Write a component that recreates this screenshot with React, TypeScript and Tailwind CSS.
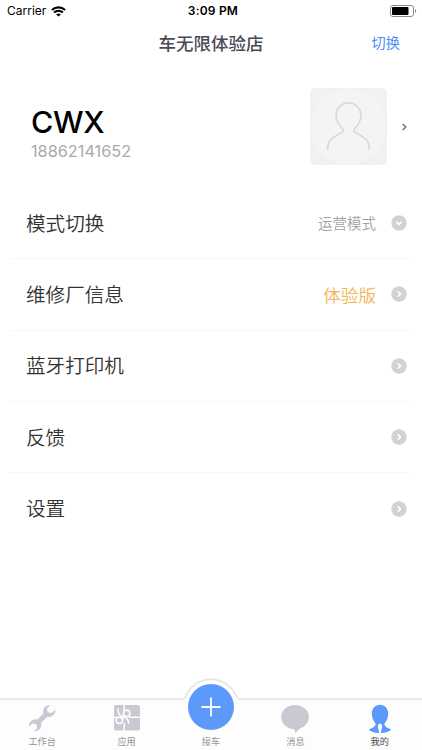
import { useState } from 'react';

const MENU = [
    { label: '模式切换', value: '运营模式', valueClass: 'text-[14.5px] text-[#a3a3a3]', arrow: 'down' },
    { label: '维修厂信息', value: '体验版', valueClass: 'text-[17.6px] text-[#f3b459]', arrow: 'right' },
    { label: '蓝牙打印机', value: '', valueClass: '', arrow: 'right' },
    { label: '反馈', value: '', valueClass: '', arrow: 'right' },
    { label: '设置', value: '', valueClass: '', arrow: 'right' },
];

function StatusBar() {
    return (
        <div className="grid h-[22px] grid-cols-[1fr_auto_1fr] items-center pl-[7px] pr-[5px] text-black">
            <div className="flex items-center gap-[5px]">
                <span className="text-[12px] leading-none">Carrier</span>
                <svg className="h-[11px] w-[15px]" viewBox="0 0 15 11" fill="none" stroke="#000" strokeWidth="2.2">
                    <path d="M.9 4C4.6.5 10.400.5 14.100 4" />
                    <path d="M3.100 6.500c2.500-2.300 6.300-2.300 8.800 0" />
                    <path d="M7.500 10.600L5.200 8.400c1.200-1.200 3.400-1.200 4.600 0z" fill="#000" stroke="none" />
                </svg>
            </div>
            <span className="pl-[2px] text-center text-[12px] font-semibold leading-none tracking-[0.2px]">3:09 PM</span>
            <svg className="h-[12px] w-[27px] justify-self-end" viewBox="0 0 27 12" fill="none">
                <rect x=".5" y=".5" width="23" height="11" rx="2.5" stroke="#8a8a8a" />
                <rect x="2" y="2" width="16.5" height="8" rx="1" fill="#000" />
                <path d="M25 4v4c1.6-.6 1.6-3.4 0-4z" fill="#8a8a8a" />
            </svg>
        </div>
    );
}

function Avatar() {
    return (
        <div className="h-[77px] w-[77px] overflow-hidden rounded-[5px] bg-[#f1f1f1]">
            <svg viewBox="0 0 76 76" fill="none">
                <circle cx="38" cy="38" r="37.5" fill="#f4f4f4" />
                <path
                    d="M17.500 61.500v-2c0-5 2-8.500 5.500-10.700l8.300-5c1.700-1 1.800-2 .8-3.300-3.500-3.800-6.400-8-6.400-13.500a12.300 12.300 0 0 1 24.600 0c0 5.500-2.900 9.700-6.400 13.500-1 1.300-.9 2.300.8 3.300l8.300 5c3.500 2.200 5.500 5.700 5.500 10.700v2"
                    stroke="#d9d9d9"
                    strokeWidth="1.700"
                />
            </svg>
        </div>
    );
}

function ArrowDot({ direction }: { direction: string }) {
    return (
        <svg className="h-4 w-4" viewBox="0 0 16 16" fill="none">
            <circle cx="8" cy="8" r="7.700" fill="#d2d2d2" />
            <path
                d={direction === 'down' ? 'M5.300 6.800L8 9.300l2.700-2.500' : 'M6.800 5.300L9.500 8l-2.700 2.700'}
                stroke="#fff"
                strokeWidth="1.700"
            />
        </svg>
    );
}

function WrenchIcon() {
    return (
        <svg className="h-7 w-7" viewBox="0 0 28 28" fill="none">
            <path d="M9.500 19L18.800 9.600" stroke="#c9c9d3" strokeWidth="5" />
            <path
                d="M22.300 1C17.500.6 14.300 4.500 15.300 9.200L19 12.900C23.300 13.900 27.900 10.500 27.300 5.500L24 9 20.600 8.500 19.500 7.600 19 4.500z"
                fill="#c9c9d3"
            />
            <path
                d="M6 27.200C10.800 27.600 14.100 23.800 13.100 19.100L9.400 15.400C5 14.400.5 17.800 1.100 22.700L4.300 19.500 7.800 19.900 8.900 21 9.200 24z"
                fill="#c9c9d3"
            />
        </svg>
    );
}

function GiftIcon() {
    return (
        <svg className="h-7 w-7" viewBox="0 0 28 28" fill="none">
            <rect x="1" y="1" width="26" height="25.500" rx="2" fill="#c9c9d3" />
            <g stroke="#fdfdfe" strokeWidth="1.600">
                <path d="M11.200.5v6M16 13.300h11.500M11.200 19v8M.5 13.300h3" />
                <circle cx="13.700" cy="9.300" r="3.200" />
                <circle cx="6.300" cy="16.300" r="3.200" />
                <path d="M4.800 4.500c0 5.300 2 8.100 6.200 8.800 3 .6 4.600 2.800 4.900 6.500M10.700 9.800c-.3 2.200-.9 3.800-1.400 6" />
            </g>
        </svg>
    );
}

function MessageIcon() {
    return (
        <svg className="h-7 w-7 overflow-visible" viewBox="0 0 28 28">
            <path
                d="M14 1C6.300 1 .1 6.200.1 13c0 6.500 5.500 11.700 12.800 12.200.9.400 1.200 1.800 1.300 3.700 1.400-.7 3.200-2.800 4.700-4.300C24.300 22.800 27.900 18.300 27.900 13 27.900 6.200 21.700 1 14 1z"
                fill="#c9c9d3"
            />
        </svg>
    );
}

function MineIcon() {
    return (
        <svg className="h-7 w-7 overflow-visible" viewBox="0 0 28 28">
            <path
                d="M14 .8c-4.800 0-8.200 3.500-8.200 8.700 0 4.300 1.500 7.300 3.500 9.500 1 3.300-2.300 5-6.500 6.300 1.700 2.600 6.200 3.800 11.200 3.800s9.500-1.200 11.200-3.800c-4.200-1.300-7.500-3-6.500-6.300 2-2.200 3.500-5.200 3.500-9.500C22.200 4.300 18.800.8 14 .8z"
                fill="#5b99fb"
            />
            <path d="M12.500 20.200l1.500-.6 1.500.6.6 2.300-1.300 6.500h-1.600l-1.300-6.500z" fill="#fff" />
        </svg>
    );
}

const TABS = [
    { label: '工作台', icon: <WrenchIcon /> },
    { label: '应用', icon: <GiftIcon /> },
    { label: '接车', icon: null },
    { label: '消息', icon: <MessageIcon /> },
    { label: '我的', icon: <MineIcon /> },
];

function TabBar() {
    const [active, setActive] = useState('我的');

    return (
        <div className="relative h-[51px]">
            {/* raised outline around the centre button */}
            <svg className="absolute bottom-0 left-0 h-[73px] w-[422px]" viewBox="0 0 422 73" fill="none">
                <path d="M0 22h182.500c1.800 0 2.300-.7 3-2.200a27.300 27.300 0 0 1 51 0c.7 1.500 1.200 2.200 3 2.200H422v51H0z" fill="#fdfdfe" />
                <path
                    d="M0 22h182.500c1.800 0 2.300-.7 3-2.200a27.300 27.300 0 0 1 51 0c.7 1.500 1.200 2.200 3 2.200H422"
                    stroke="#e3e3e5"
                    strokeWidth="1.500"
                />
            </svg>
            <div className="relative grid grid-cols-5 grid-rows-[51px]">
                {TABS.map((tab) => (
                    <button
                        key={tab.label}
                        onClick={() => setActive(tab.label)}
                        className="flex flex-col items-center justify-end gap-[5px] pb-[3px]"
                    >
                        {tab.icon || (
                            <span className="mb-[2px] flex h-[46px] w-[46px] shrink-0 items-center justify-center rounded-full bg-[#5b99fb]">
                                <svg className="h-5 w-5" viewBox="0 0 20 20" stroke="#fff" strokeWidth="1.800">
                                    <path d="M10 .5v19M.5 10h19" />
                                </svg>
                            </span>
                        )}
                        <span
                            className={`text-[9.200px] leading-[10px] ${active === tab.label ? 'text-[#4a4a55]' : 'text-[#96969b]'}`}
                        >
                            {tab.label}
                        </span>
                    </button>
                ))}
            </div>
        </div>
    );
}

export default function App() {
    return (
        <div className="flex h-[750px] w-[422px] flex-col overflow-hidden bg-white font-[Inter,'Noto_Sans_CJK_SC',sans-serif]">
            <StatusBar />
            <header className="grid h-[43px] grid-cols-[1fr_auto_1fr] items-center px-[22px]">
                <h1 className="col-start-2 text-[17.500px] font-medium leading-none text-[#4b4a59]">车无限体验店</h1>
                <button className="justify-self-end text-[14.200px] leading-none text-[#4f8df5]">切换</button>
            </header>

            <section className="flex h-[123px] items-center pl-[31px] pr-[15px]">
                <div className="flex-1 pt-[13px]">
                    <p className="text-[30.500px] font-[450] leading-[34px] tracking-[-0.3px] text-black">CWX</p>
                    <p className="mt-[2px] text-[16.300px] leading-[20px] text-[#aaaaaa]">18862141652</p>
                </div>
                <Avatar />
                <svg className="ml-[15px] h-2 w-[5px]" viewBox="0 0 5 8" fill="none" stroke="#6b6b6b" strokeWidth="1.300">
                    <path d="M.7 1L3.900 4 .7 7" />
                </svg>
            </section>

            <ul className="flex-1 px-[10px]">
                {MENU.map((item) => (
                    <li
                        key={item.label}
                        className="flex h-[71.250px] items-center border-b border-[#f7f7f7] pl-4 pr-[5px] last:border-b-0"
                    >
                        <span className="flex-1 pt-[3px] text-[19.600px] font-[350] leading-none text-[#333333]">{item.label}</span>
                        <span className={`mr-[15px] pt-[2px] font-[350] leading-none ${item.valueClass}`}>{item.value}</span>
                        <ArrowDot direction={item.arrow} />
                    </li>
                ))}
            </ul>
            <TabBar />
        </div>
    );
}
